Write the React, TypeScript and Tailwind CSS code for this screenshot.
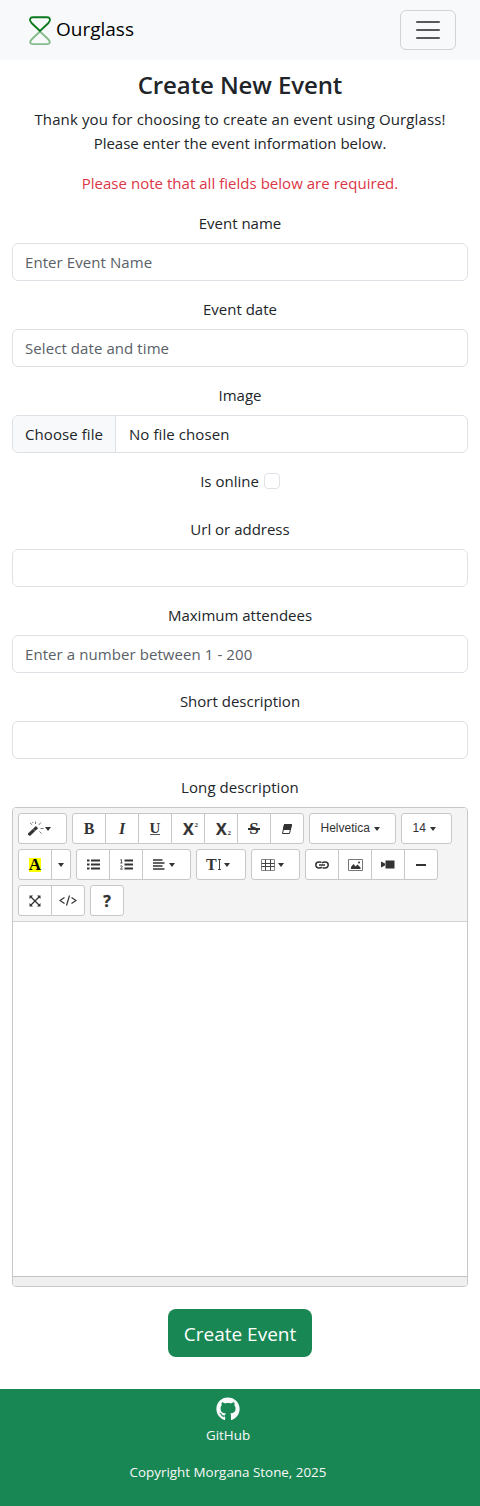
import type { ReactNode } from "react";
import { FaGithub } from "react-icons/fa";

function Field({ label, placeholder }: { label: string; placeholder?: string }) {
  return (
    <div className="mb-4 flex flex-col items-center">
      <label className="mb-2 h-6 leading-6">{label}</label>
      <div className="flex h-[38px] w-full items-center rounded-md border border-[#dee2e6] bg-white px-3 tracking-[0.08px] text-[#596067]">
        {placeholder && <span>{placeholder}</span>}
      </div>
    </div>
  );
}

function Group({ children }: { children: ReactNode }) {
  return (
    <div className="flex h-[31px] divide-x divide-[#c8c8c8] overflow-hidden rounded-[3px] border border-[#c8c8c8] bg-white">
      {children}
    </div>
  );
}

function Btn({ w = "w-8 justify-center", children }: { w?: string; children: ReactNode }) {
  return <button className={`box-content flex h-full shrink-0 items-center text-[#333] ${w}`}>{children}</button>;
}

function Menu({ w, children }: { w: string; children: ReactNode }) {
  return (
    <button className={`flex h-full shrink-0 items-center text-[#333] ${w}`}>
      {children}
      <Caret />
    </button>
  );
}

function Caret() {
  return (
    <svg className="mt-px shrink-0" width="6" height="4" viewBox="0 0 6 4">
      <path d="M0 0H6L3 4Z" fill="#333" />
    </svg>
  );
}

function Icon({ w = 14, h = 12, className = "", children }: { w?: number; h?: number; className?: string; children: ReactNode }) {
  return (
    <svg className={`shrink-0 ${className}`} width={w} height={h} viewBox={`0 0 ${w} ${h}`} fill="none" stroke="#333">
      {children}
    </svg>
  );
}

function Toolbar() {
  return (
    <div className="flex h-[114px] flex-wrap content-start gap-[5px] border-b border-[#d4d4d4] bg-[#f4f4f4] p-[5px]">
      <Group>
        <Menu w="w-[47px] pl-[9px]">
          <Icon w={16} h={15} className="mr-px">
            <path d="M.8 14 9 6.200" strokeWidth="3.100" />
            <path d="M7 9.800 5.600 8.300" strokeWidth=".5" stroke="#fff" />
            <path d="M7.500.5v2.500M2 1.800l2.200 2M12.800 1.500 10.800 4M12.500 7.500h3M11.500 10.500l2 2M4.500 1l.5 1" strokeWidth="1" stroke="#777" />
          </Icon>
        </Menu>
      </Group>
      <Group>
        <Btn><span className="font-['Liberation_Serif',serif] text-[16px] leading-none font-bold">B</span></Btn>
        <Btn><span className="font-['Liberation_Serif',serif] text-[16px] leading-none font-bold italic">I</span></Btn>
        <Btn>
          <span className="border-b border-[#555] font-['Liberation_Serif',serif] text-[15px] leading-[11px] font-bold">U</span>
        </Btn>
        <Btn>
          <span className="pl-[5px] font-['Open_Sans',sans-serif] text-[16px] leading-none font-bold [-webkit-text-stroke:0.2px_#333]">X</span>
          <span className="mb-[7px] pl-px font-['Liberation_Serif',serif] text-[7px] leading-none font-bold">2</span>
        </Btn>
        <Btn>
          <span className="pl-[5px] font-['Open_Sans',sans-serif] text-[16px] leading-none font-bold [-webkit-text-stroke:0.2px_#333]">X</span>
          <span className="mt-[10px] pl-px font-['Liberation_Serif',serif] text-[7px] leading-none font-bold">2</span>
        </Btn>
        <Btn>
          <span className="flex w-3 justify-center bg-[linear-gradient(#333,#333)] bg-[length:100%_2px] bg-center bg-no-repeat font-['Liberation_Serif',serif] text-[17px] leading-none font-bold">S</span>
        </Btn>
        <Btn>
          <Icon w={12} h={11} className="mt-px">
            <path d="M3.500.5H10.500L8.500 9.500H1.500Z" fill="#fff" strokeWidth="1" />
            <path d="M3.500.5H10.500L9.300 5.500H2.400Z" fill="#333" />
          </Icon>
        </Btn>
      </Group>
      <Group>
        <Menu w="w-[85px] pl-[10.5px]">
          <span className="mr-1 mb-px font-['Liberation_Sans',sans-serif] text-[12px] leading-none">Helvetica</span>
        </Menu>
      </Group>
      <Group>
        <Menu w="w-[49px] pl-[10.5px]">
          <span className="mr-1 mb-px font-['Liberation_Sans',sans-serif] text-[12px] leading-none">14</span>
        </Menu>
      </Group>
      <Group>
        <Btn>
          <span className="flex h-[14px] w-3 items-center justify-center bg-[#ff0] font-['Liberation_Serif',serif] text-[17px] leading-none font-bold text-black">A</span>
        </Btn>
        <Btn w="w-[18px] justify-center"><Caret /></Btn>
      </Group>
      <Group>
        <Btn>
          <Icon w={13} h={11}>
            <path d="M0 1.500h2.500M0 5.500h2.500M0 9.500h2.500M4 1.500h9M4 5.500h9M4 9.500h9" strokeWidth="2.200" />
          </Icon>
        </Btn>
        <Btn>
          <Icon w={13} h={11}>
            <path d="M4.500 1.500H13M4.500 5.500H13M4.500 9.500H13" strokeWidth="2.200" />
            <path d="M.3 1 1.500.5V4M.3 4h2.200M.3 7.200C1 6.300 2.500 6.600 2.200 8L.5 10.200H2.700" strokeWidth=".8" />
          </Icon>
        </Btn>
        <Menu w="w-[47px] pl-[10px]">
          <Icon w={12} h={11} className="mr-1">
            <path d="M0 1h9.500M0 4h11.500M0 7h9.500M0 10h11.500" strokeWidth="1.500" />
          </Icon>
        </Menu>
      </Group>
      <Group>
        <Menu w="w-12 pl-[9px]">
          <span className="font-['Liberation_Serif',serif] text-[16px] leading-none font-bold">T</span>
          <Icon w={5} h={11} className="mr-[2px]">
            <path d="M1 .5h3M2.500.500v10M1 10.500h3" strokeWidth=".9" />
          </Icon>
        </Menu>
      </Group>
      <Group>
        <Menu w="w-[47px] pl-[9px]">
          <Icon w={14} h={12} className="mr-[3px]">
            <path d="M.5.500h13v11H.5Z" stroke="#888" />
            <path d="M4.500.500v11M9.500.500v11M.5 4.500h13M.5 7.500h13" stroke="#444" />
          </Icon>
        </Menu>
      </Group>
      <Group>
        <Btn>
          <Icon w={14} h={8}>
            <path d="M6.300 1.300C5.500 1 4.500 1 3.800 1a3 3 0 0 0 0 6c1.200 0 2.500 0 3.200-1M7.700 6.700c.8.3 1.700.3 2.500.3a3 3 0 0 0 0-6C9 1 7.700 1 7 2" strokeWidth="1.500" />
            <path d="M4 4h6" strokeWidth="1.400" />
          </Icon>
        </Btn>
        <Btn>
          <Icon w={15} h={12}>
            <path d="M.5.500h14v11H.5Z" stroke="#777" />
            <path d="M3 10V8l2.500-3L7.500 7.500 9.500 5.500 12.500 8.500V10Z" fill="#333" stroke="none" />
            <circle cx="11" cy="3.500" r="1" fill="#333" stroke="none" />
          </Icon>
        </Btn>
        <Btn>
          <Icon w={14} h={9}>
            <path d="M4.500.5h9v8h-9ZM0 1.500 4 3.500v2L0 7.500Z" fill="#333" stroke="none" />
          </Icon>
        </Btn>
        <Btn>
          <Icon w={10} h={2}>
            <path d="M0 1h10" strokeWidth="2" />
          </Icon>
        </Btn>
      </Group>
      <Group>
        <Btn>
          <Icon w={12} h={12}>
            <path d="M1.500 1.500 10.500 10.500M10.500 1.500 1.500 10.500" strokeWidth="1.300" />
            <path d="M.5.500H4L.5 4ZM11.500.500V4L8 .5ZM.5 11.500V8L4 11.500ZM11.500 11.500H8L11.500 8Z" fill="#333" stroke="none" />
          </Icon>
        </Btn>
        <Btn>
          <Icon w={18} h={11}>
            <path d="M5.500 2.500 1 5.500l4.500 3M12.500 2.500 17 5.500l-4.500 3M10.500.5l-3 10" strokeWidth="1.200" />
          </Icon>
        </Btn>
      </Group>
      <Group>
        <Btn><span className="font-['Open_Sans',sans-serif] text-[16px] leading-none font-bold [-webkit-text-stroke:0.3px_#333]">?</span></Btn>
      </Group>
    </div>
  );
}

export default function App() {
  return (
    <div className="flex min-h-[1506px] flex-col bg-white font-['Open_Sans','Noto_Sans',sans-serif] text-[15px] leading-6 text-[#212529]">
      <nav className="flex h-[60px] items-center justify-between bg-[#f8f9fa] pr-6 pl-7">
        <div className="flex items-center gap-1 text-[19px] text-black">
          <svg width="24" height="32" viewBox="0 0 24 32" fill="none" strokeWidth="1.900">
            <path d="M12 17.500 4 25C.8 28.300 2.200 30.100 5 30.100H19C21.800 30.100 23.200 28.300 20 25Z" stroke="#84bc8e" />
            <path d="M12 17 3.800 9.300C.6 6 2 3.300 5 3.300H19C22 3.300 23.400 6 20.200 9.300Z" stroke="#0b7a1e" />
          </svg>
          <span className="mb-[2px]">Ourglass</span>
        </div>
        <button className="flex h-10 w-14 items-center justify-center rounded-md border border-[#d2d3d5]">
          <svg width="30" height="30" viewBox="0 0 30 30" stroke="#56585c" strokeWidth="2" strokeLinecap="round">
            <path d="M4 7h22M4 15h22M4 23h22" />
          </svg>
        </button>
      </nav>

      <main className="flex flex-1 flex-col px-3 pt-[10px]">
        <h2 className="mb-[7px] text-center text-[24px] leading-[30px] font-semibold tracking-[-0.1px]">Create New Event</h2>
        <p className="mb-4 text-center">
          <span className="tracking-[0.12px]">Thank you for choosing to create an event using Ourglass!</span>
          <br />
          Please enter the event information below.
        </p>
        <p className="mb-4 text-center tracking-[0.03px] text-[#dc3545]">Please note that all fields below are required.</p>

        <Field label="Event name" placeholder="Enter Event Name" />
        <Field label="Event date" placeholder="Select date and time" />

        <div className="mb-4 flex flex-col items-center">
          <label className="mb-2 h-6">Image</label>
          <div className="flex h-[38px] w-full items-stretch overflow-hidden rounded-md border border-[#dee2e6] tracking-[0.08px]">
            <span className="flex w-[103px] items-center border-r border-[#dee2e6] bg-[#f8f9fa] pl-3">Choose file</span>
            <span className="flex items-center pl-[13px]">No file chosen</span>
          </div>
        </div>

        <div className="mb-6 flex h-6 items-center justify-center gap-[5px]">
          <label>Is online</label>
          <span className="size-4 rounded-[4px] border border-[#dee2e6] bg-white" />
        </div>

        <Field label="Url or address" />
        <Field label="Maximum attendees" placeholder="Enter a number between 1 - 200" />
        <Field label="Short description" />

        <label className="mb-2 h-6 text-center tracking-[0.08px]">Long description</label>
        <div className="flex h-[480px] flex-col overflow-hidden rounded-[4px] border border-[#c8c8c8]">
          <Toolbar />
          <div className="flex-1 bg-white" />
          <div className="h-[10px] border-t border-[#c0c0c0] bg-[#f0f0f0]" />
        </div>

        <button className="mt-[22px] h-12 w-36 self-center rounded-lg bg-[#198754] pt-[2px] text-[19px] text-white">Create Event</button>
      </main>

      <footer className="flex h-[117px] flex-col items-center bg-[#198754] pt-2 pr-6 text-[13.4px] leading-[21px] text-[#f8f9fa]">
        <FaGithub size={24} />
        <span className="mt-1">GitHub</span>
        <p className="mt-4">Copyright Morgana Stone, 2025</p>
      </footer>
    </div>
  );
}
